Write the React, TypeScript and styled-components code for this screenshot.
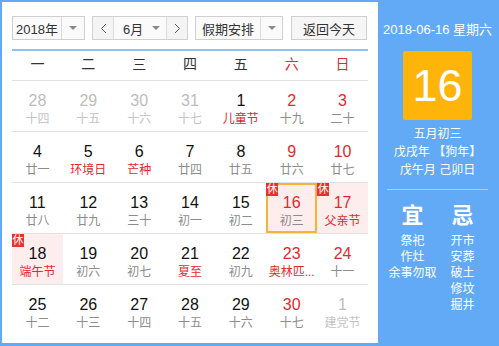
import React from 'react';
import styled, { createGlobalStyle } from 'styled-components';

const BLUE = '#62aaf6';
const RED = '#e0292f';

const GlobalStyle = createGlobalStyle`
  html, body {
    margin: 0;
    padding: 0;
    background: #fff;
  }
  body {
    font-family: 'Liberation Sans', 'Noto Sans CJK SC', sans-serif;
  }
`;

const Frame = styled.div`
  width: 499px;
  height: 346px;
  box-sizing: border-box;
  border: 2px solid ${BLUE};
  border-bottom-width: 3px;
  display: flex;
`;

const Main = styled.div`
  width: 376px;
  box-sizing: border-box;
  padding: 14px 10px 0 10px;
  background: #fff;
`;

const Toolbar = styled.div`
  display: flex;
  height: 24px;
  gap: 7px;
`;

const Select = styled.div<{ $w: number }>`
  width: ${(p) => p.$w}px;
  box-sizing: border-box;
  height: 24px;
  border: 1px solid #cfcfcf;
  background: #fafafa;
  display: flex;
  font-size: 13px;
  color: #333;
  white-space: nowrap;
`;

const SelectLabel = styled.div`
  flex: 1;
  display: flex;
  align-items: center;
  justify-content: center;
`;

const Caret = styled.div<{ $w: number; $line?: boolean }>`
  width: ${(p) => p.$w}px;
  flex-shrink: 0;
  display: flex;
  align-items: center;
  justify-content: center;
  border-left: ${(p) => (p.$line ? '1px solid #dcdcdc' : 'none')};

  &::after {
    content: '';
    border-left: 4px solid transparent;
    border-right: 4px solid transparent;
    border-top: 4px solid #8a8a8a;
  }
`;

const StepBtn = styled.div<{ $side: 'l' | 'r' }>`
  width: 20px;
  flex-shrink: 0;
  display: flex;
  align-items: center;
  justify-content: center;
  background: #f4f4f4;
  border-${(p) => (p.$side === 'l' ? 'right' : 'left')}: 1px solid #dcdcdc;
`;

const MonthLabel = styled.div`
  flex: 1;
  display: flex;
  align-items: center;
  padding-left: 9px;
`;

const TodayButton = styled.div`
  width: 76px;
  height: 24px;
  box-sizing: border-box;
  margin-left: 1px;
  border: 1px solid #cfcfcf;
  background: #f6f6f6;
  font-size: 13px;
  color: #333;
  display: flex;
  align-items: center;
  justify-content: center;
`;

const BlueRule = styled.div`
  height: 2px;
  margin-top: 9px;
  background: #8fc2f3;
`;

const WeekHeader = styled.div`
  display: grid;
  grid-template-columns: repeat(7, 1fr);
  height: 29px;
  line-height: 27px;
  border-bottom: 1px solid #e2e2e2;
  font-size: 14px;
  text-align: center;
`;

const HeadCell = styled.div<{ $weekend?: boolean }>`
  color: ${(p) => (p.$weekend ? RED : '#333')};
`;

const Week = styled.div`
  display: grid;
  grid-template-columns: repeat(7, 1fr);
  height: 50px;
  border-bottom: 1px solid #e2e2e2;

  &:last-child {
    border-bottom: none;
  }
`;

const Cell = styled.div<{ $holiday?: boolean; $today?: boolean }>`
  position: relative;
  display: flex;
  flex-direction: column;
  align-items: center;
  padding-top: 11px;
  box-sizing: border-box;
  background: ${(p) => (p.$holiday || p.$today ? '#fdeded' : 'transparent')};
  box-shadow: ${(p) => (p.$today ? 'inset 0 0 0 2px #f5b33a' : 'none')};
`;

const DayNum = styled.div<{ $tone: string }>`
  font-size: 16px;
  line-height: 18px;
  color: ${(p) => p.$tone};
`;

const Lunar = styled.div<{ $tone: string }>`
  margin-top: 1px;
  font-size: 12px;
  line-height: 16px;
  color: ${(p) => p.$tone};
  white-space: nowrap;
`;

const RestBadge = styled.span`
  position: absolute;
  top: 0;
  left: 0;
  width: 12px;
  height: 13px;
  background: #e8302e;
  color: #fff;
  font-size: 11px;
  line-height: 13px;
  text-align: center;
`;

const Side = styled.div`
  flex: 1;
  background: ${BLUE};
  color: #fff;
  display: flex;
  flex-direction: column;
  align-items: center;
  padding-top: 20px;
`;

const DateLine = styled.div`
  font-size: 13px;
  line-height: 16px;
`;

const BigDay = styled.div`
  margin-top: 13px;
  width: 69px;
  height: 69px;
  border-radius: 2px;
  background: #ffb40a;
  display: flex;
  align-items: center;
  justify-content: center;
  font-size: 45px;
  line-height: 1;
`;

const LunarInfo = styled.div`
  margin-top: 5px;
  font-size: 12px;
  line-height: 18px;
  text-align: center;
`;

const SideRule = styled.div`
  margin-top: 10px;
  width: 101px;
  height: 1px;
  background: rgba(255, 255, 255, 0.45);
`;

const Almanac = styled.div`
  margin-top: 13px;
  display: grid;
  grid-template-columns: 50px 50px;
  text-align: center;
`;

const AlmanacCol = styled.div`
  display: flex;
  flex-direction: column;
  align-items: center;
`;

const AlmanacHead = styled.div`
  font-size: 22px;
  line-height: 26px;
  font-weight: bold;
`;

const AlmanacList = styled.div`
  margin-top: 4px;
  font-size: 12px;
  line-height: 16px;
  white-space: nowrap;
`;

type Day = {
  n: number;
  l: string;
  other?: boolean;
  redNum?: boolean;
  redLunar?: boolean;
  rest?: boolean;
  holiday?: boolean;
  today?: boolean;
};

const weeks: Day[][] = [
  [
    { n: 28, l: '十四', other: true },
    { n: 29, l: '十五', other: true },
    { n: 30, l: '十六', other: true },
    { n: 31, l: '十七', other: true },
    { n: 1, l: '儿童节', redLunar: true },
    { n: 2, l: '十九', redNum: true },
    { n: 3, l: '二十', redNum: true },
  ],
  [
    { n: 4, l: '廿一' },
    { n: 5, l: '环境日', redLunar: true },
    { n: 6, l: '芒种', redLunar: true },
    { n: 7, l: '廿四' },
    { n: 8, l: '廿五' },
    { n: 9, l: '廿六', redNum: true },
    { n: 10, l: '廿七', redNum: true },
  ],
  [
    { n: 11, l: '廿八' },
    { n: 12, l: '廿九' },
    { n: 13, l: '三十' },
    { n: 14, l: '初一' },
    { n: 15, l: '初二' },
    { n: 16, l: '初三', redNum: true, rest: true, today: true },
    { n: 17, l: '父亲节', redNum: true, redLunar: true, rest: true, holiday: true },
  ],
  [
    { n: 18, l: '端午节', redLunar: true, rest: true, holiday: true },
    { n: 19, l: '初六' },
    { n: 20, l: '初七' },
    { n: 21, l: '夏至', redLunar: true },
    { n: 22, l: '初九' },
    { n: 23, l: '奥林匹...', redNum: true, redLunar: true },
    { n: 24, l: '十一', redNum: true },
  ],
  [
    { n: 25, l: '十二' },
    { n: 26, l: '十三' },
    { n: 27, l: '十四' },
    { n: 28, l: '十五' },
    { n: 29, l: '十六' },
    { n: 30, l: '十七', redNum: true },
    { n: 1, l: '建党节', other: true },
  ],
];

const weekdays = ['一', '二', '三', '四', '五', '六', '日'];

const Chevron = ({ dir }: { dir: 'l' | 'r' }) => (
  <svg width="7" height="11" viewBox="0 0 7 11">
    <polyline
      points={dir === 'l' ? '6,1 1.5,5.5 6,10' : '1,1 5.5,5.5 1,10'}
      fill="none"
      stroke="#555"
      strokeWidth="1"
    />
  </svg>
);

const numTone = (d: Day) => (d.other ? '#bdbdbd' : d.redNum ? RED : '#111');
const lunarTone = (d: Day) => (d.other ? '#c4c4c4' : d.redLunar ? RED : '#8c8c8c');

const App = () => {
  return (
    <>
      <GlobalStyle />
      <Frame>
        <Main>
          <Toolbar>
            <Select $w={73}>
              <SelectLabel>2018年</SelectLabel>
              <Caret $w={22} $line />
            </Select>
            <Select $w={96}>
              <StepBtn $side="l">
                <Chevron dir="l" />
              </StepBtn>
              <MonthLabel>6月</MonthLabel>
              <Caret $w={20} />
              <StepBtn $side="r">
                <Chevron dir="r" />
              </StepBtn>
            </Select>
            <Select $w={88}>
              <SelectLabel>假期安排</SelectLabel>
              <Caret $w={21} $line />
            </Select>
            <TodayButton>返回今天</TodayButton>
          </Toolbar>
          <BlueRule />
          <WeekHeader>
            {weekdays.map((w, i) => (
              <HeadCell key={w} $weekend={i > 4}>
                {w}
              </HeadCell>
            ))}
          </WeekHeader>
          {weeks.map((week, wi) => (
            <Week key={wi}>
              {week.map((d, di) => (
                <Cell key={di} $holiday={d.holiday} $today={d.today}>
                  {d.rest && <RestBadge>休</RestBadge>}
                  <DayNum $tone={numTone(d)}>{d.n}</DayNum>
                  <Lunar $tone={lunarTone(d)}>{d.l}</Lunar>
                </Cell>
              ))}
            </Week>
          ))}
        </Main>
        <Side>
          <DateLine>2018-06-16 星期六</DateLine>
          <BigDay>16</BigDay>
          <LunarInfo>
            五月初三
            <br />
            戊戌年 【狗年】
            <br />
            戊午月 己卯日
          </LunarInfo>
          <SideRule />
          <Almanac>
            <AlmanacCol>
              <AlmanacHead>宜</AlmanacHead>
              <AlmanacList>
                祭祀
                <br />
                作灶
                <br />
                余事勿取
              </AlmanacList>
            </AlmanacCol>
            <AlmanacCol>
              <AlmanacHead>忌</AlmanacHead>
              <AlmanacList>
                开市
                <br />
                安葬
                <br />
                破土
                <br />
                修坟
                <br />
                掘井
              </AlmanacList>
            </AlmanacCol>
          </Almanac>
        </Side>
      </Frame>
    </>
  );
};

export default App;
